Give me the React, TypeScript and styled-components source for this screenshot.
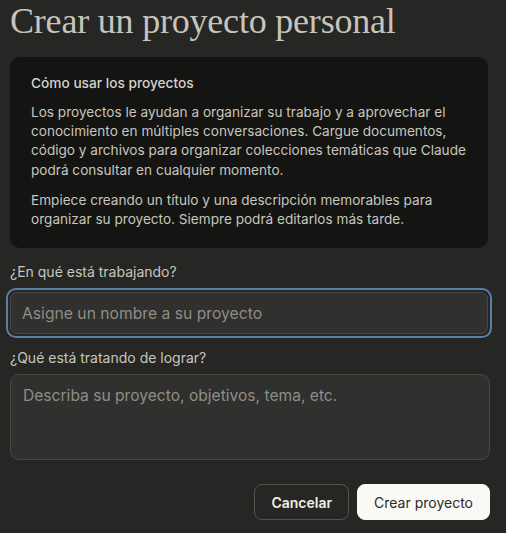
import React from 'react';
import styled, { createGlobalStyle } from 'styled-components';

const GlobalStyle = createGlobalStyle`
  html, body {
    margin: 0;
    padding: 0;
    background: #262624;
  }
  * { box-sizing: border-box; }
`;

const App: React.FC = () => {
  return (
    <>
      <GlobalStyle />
      <Page>
        <Title>Crear un proyecto personal</Title>
        <InfoCard>
          <InfoHeading>Cómo usar los proyectos</InfoHeading>
          <InfoText>
            Los proyectos le ayudan a organizar su trabajo y a aprovechar el conocimiento en múltiples
            conversaciones. Cargue documentos, código y archivos para organizar colecciones temáticas
            que Claude podrá consultar en cualquier momento.
          </InfoText>
          <InfoText>
            Empiece creando un título y una descripción memorables para organizar su proyecto. Siempre
            podrá editarlos más tarde.
          </InfoText>
        </InfoCard>

        <Field $gap={14}>
          <Label>¿En qué está trabajando?</Label>
          <InputRing>
            <Input placeholder="Asigne un nombre a su proyecto" />
          </InputRing>
        </Field>

        <Field $gap={10}>
          <Label>¿Qué está tratando de lograr?</Label>
          <TextArea placeholder="Describa su proyecto, objetivos, tema, etc." />
        </Field>

        <Actions>
          <Button>Cancelar</Button>
          <Button $primary>Crear proyecto</Button>
        </Actions>
      </Page>
    </>
  );
};

const sans = `Inter, 'Noto Sans', sans-serif`;

const Page = styled.div`
  width: 506px;
  min-height: 533px;
  padding: 0 16px 0 10px;
  display: flex;
  flex-direction: column;
  font-family: ${sans};
`;

const Title = styled.h1`
  margin: 0;
  font-family: 'Liberation Serif', serif;
  font-weight: 400;
  font-size: 36px;
  line-height: 42px;
  color: #c6c4bb;
  letter-spacing: -0.2px;
`;

const InfoCard = styled.div`
  margin-top: 15px;
  width: 478px;
  background: #141413;
  border-radius: 10px;
  padding: 16px 20px 19px 21px;
`;

const InfoHeading = styled.div`
  font-size: 13.7px;
  font-weight: 500;
  line-height: 20px;
  color: #d4d2c9;
  margin-bottom: 10px;
`;

const InfoText = styled.p`
  margin: 0;
  font-size: 13.6px;
  line-height: 19.2px;
  color: #c8c6bd;

  & + & {
    margin-top: 11px;
  }
`;

const Field = styled.div<{ $gap: number }>`
  display: flex;
  flex-direction: column;
  margin-top: ${(p) => p.$gap}px;
`;

const Label = styled.label`
  font-size: 14px;
  line-height: 20px;
  color: #c8c6bd;
  margin-bottom: 6px;
`;

const InputRing = styled.div`
  margin-left: -4px;
  width: 486px;
  padding: 2px;
  border: 2px solid #5b7fa8;
  border-radius: 10px;
`;

const Input = styled.input`
  width: 100%;
  height: 42px;
  background: #30302e;
  border: 1px solid #474743;
  border-radius: 7px;
  padding: 0 11px;
  font-family: ${sans};
  font-size: 15.7px;
  color: #e8e6dd;
  outline: none;

  &::placeholder {
    color: #8f8d86;
  }
`;

const TextArea = styled.textarea`
  width: 480px;
  height: 86px;
  resize: none;
  background: #30302e;
  border: 1px solid #474743;
  border-radius: 9px;
  padding: 10px 12px;
  font-family: ${sans};
  font-size: 15.6px;
  line-height: 22px;
  color: #e8e6dd;
  outline: none;

  &::placeholder {
    color: #8f8d86;
  }
`;

const Actions = styled.div`
  display: flex;
  justify-content: flex-end;
  gap: 8px;
  width: 480px;
  margin-top: 24px;
`;

const Button = styled.button<{ $primary?: boolean }>`
  height: 36px;
  padding: 0 16px;
  border-radius: 8px;
  font-family: ${sans};
  font-size: 14px;
  font-weight: ${(p) => (p.$primary ? 400 : 600)};
  cursor: pointer;
  background: ${(p) => (p.$primary ? '#faf9f5' : '#262624')};
  color: ${(p) => (p.$primary ? '#2b2a27' : '#f0eee6')};
  border: 1px solid ${(p) => (p.$primary ? '#faf9f5' : '#55544f')};
`;

export default App;
